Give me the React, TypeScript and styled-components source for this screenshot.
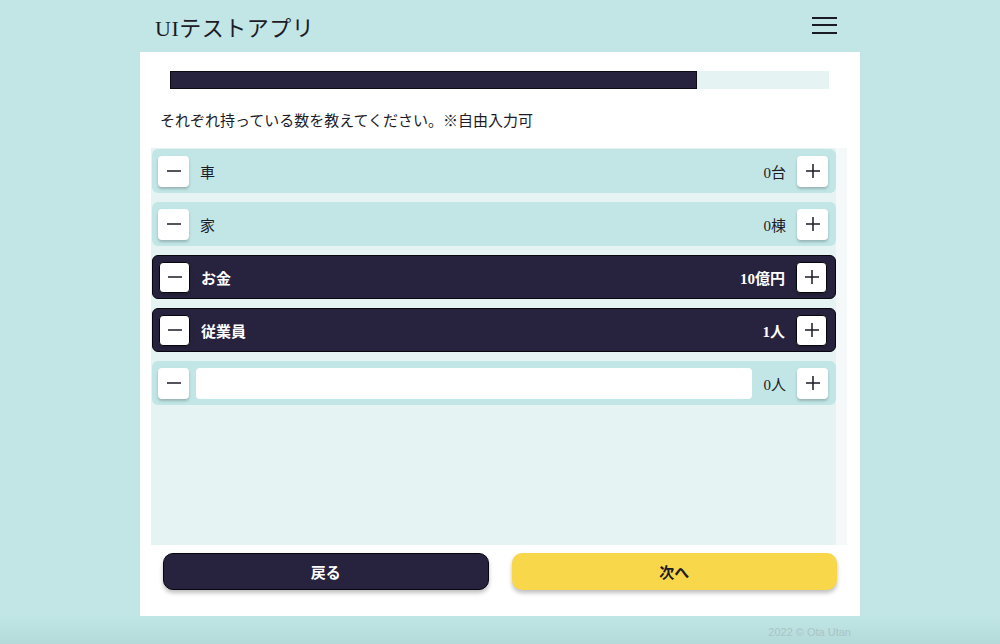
import styled, { createGlobalStyle } from 'styled-components';

const GlobalStyle = createGlobalStyle`
  html, body {
    margin: 0;
    padding: 0;
    background: #c2e6e6;
  }
  body {
    font-family: 'Liberation Serif', 'Noto Sans CJK JP', serif;
    color: #1c1b26;
  }
`;

interface Item {
  label: string;
  value: string;
  active?: boolean;
  editable?: boolean;
}

const items: Item[] = [
  { label: '車', value: '0台' },
  { label: '家', value: '0棟' },
  { label: 'お金', value: '10億円', active: true },
  { label: '従業員', value: '1人', active: true },
  { label: '', value: '0人', editable: true },
];

const progress = 0.8;

const MinusIcon = () => (
  <svg width="16" height="16" viewBox="0 0 16 16">
    <path d="M1 8h14" stroke="#1c1b26" strokeWidth="1.5" />
  </svg>
);

const PlusIcon = () => (
  <svg width="16" height="16" viewBox="0 0 16 16">
    <path d="M1 8h14M8 1v14" stroke="#1c1b26" strokeWidth="1.5" />
  </svg>
);

export default function App() {
  return (
    <>
      <GlobalStyle />
      <StyledPage>
        <Header>
          <Title>UIテストアプリ</Title>
          <Hamburger aria-label="menu">
            <span />
            <span />
            <span />
          </Hamburger>
        </Header>
        <Card>
          <ProgressTrack>
            <ProgressFill style={{ width: `${progress * 100}%` }} />
          </ProgressTrack>
          <Instruction>それぞれ持っている数を教えてください。※自由入力可</Instruction>
          <List>
            <Rows>
              {items.map((item, i) => (
                <Row key={i} $active={item.active}>
                  <StepButton $active={item.active}>
                    <MinusIcon />
                  </StepButton>
                  {item.editable ? <FreeInput /> : <Label>{item.label}</Label>}
                  <Value>{item.value}</Value>
                  <StepButton $active={item.active}>
                    <PlusIcon />
                  </StepButton>
                </Row>
              ))}
            </Rows>
          </List>
          <Actions>
            <ActionButton $variant="back">戻る</ActionButton>
            <ActionButton $variant="next">次へ</ActionButton>
          </Actions>
        </Card>
        <Footer>2022 © Ota Utan</Footer>
      </StyledPage>
    </>
  );
}

const StyledPage = styled.div`
  width: 720px;
  margin: 0 auto;
  min-height: 644px;
  display: flex;
  flex-direction: column;
`;

const Header = styled.header`
  height: 52px;
  display: flex;
  align-items: center;
  justify-content: space-between;
  padding: 0 23px 0 15px;
  box-sizing: border-box;
`;

const Title = styled.h1`
  margin: 0;
  font-size: 22px;
  font-weight: normal;
  letter-spacing: 0.5px;
  color: #1c1b26;
`;

const Hamburger = styled.button`
  width: 25px;
  height: 17px;
  padding: 0;
  border: none;
  background: none;
  display: flex;
  flex-direction: column;
  justify-content: space-between;
  margin-top: -2px;
  span {
    display: block;
    height: 2px;
    background: #1a1a24;
  }
`;

const Card = styled.main`
  background: #fff;
  height: 564px;
  box-sizing: border-box;
  padding: 19px 0 0;
  display: flex;
  flex-direction: column;
`;

const ProgressTrack = styled.div`
  height: 18px;
  margin: 0 31px 0 30px;
  background: #e6f3f3;
`;

const ProgressFill = styled.div`
  height: 100%;
  background: #27233f;
  border: 1px solid #0c0b14;
  box-sizing: border-box;
`;

const Instruction = styled.p`
  margin: 21px 0 0 20px;
  font-size: 15px;
  line-height: 22px;
  height: 38px;
  color: #1c1b26;
`;

const List = styled.div`
  margin: 0 13px 0 11px;
  height: 397px;
  background: #e6f3f3;
  border-right: 11px solid #f6f9f9;
  box-sizing: border-box;
  padding: 1px 0 0 1px;
`;

const Rows = styled.div`
  display: flex;
  flex-direction: column;
  gap: 9px;
`;

const Row = styled.div<{ $active?: boolean }>`
  height: 44px;
  box-sizing: border-box;
  display: flex;
  align-items: center;
  gap: 11px;
  padding: 0 8px 0 6px;
  border-radius: 6px;
  background: ${(p) => (p.$active ? '#27233f' : '#c2e6e6')};
  border: ${(p) => (p.$active ? '1px solid #07060c' : 'none')};
  color: ${(p) => (p.$active ? '#fff' : '#1c1b26')};
  font-weight: ${(p) => (p.$active ? 'bold' : 'normal')};
`;

const StepButton = styled.button<{ $active?: boolean }>`
  flex: none;
  width: 31px;
  height: 31px;
  padding: 0;
  display: flex;
  align-items: center;
  justify-content: center;
  background: #fff;
  border-radius: 4px;
  border: ${(p) => (p.$active ? '1px solid #07060c' : 'none')};
  box-shadow: 0 2px 3px rgba(0, 0, 0, 0.22);
`;

const Label = styled.span`
  flex: 1;
  font-size: 15px;
`;

const FreeInput = styled.input`
  flex: 1;
  height: 29px;
  border: none;
  border-radius: 4px;
  background: #fff;
  outline: none;
  margin-left: -4px;
`;

const Value = styled.span`
  font-size: 15px;
  margin-left: auto;
`;

const Actions = styled.div`
  display: grid;
  grid-template-columns: 1fr 1fr;
  gap: 23px;
  padding: 8px 23px 0;
`;

const ActionButton = styled.button<{ $variant: 'back' | 'next' }>`
  height: 37px;
  border-radius: 10px;
  font-family: inherit;
  font-size: 15px;
  font-weight: bold;
  cursor: pointer;
  background: ${(p) => (p.$variant === 'back' ? '#27233f' : '#f8d74a')};
  color: ${(p) => (p.$variant === 'back' ? '#fff' : '#1c1b26')};
  border: ${(p) => (p.$variant === 'back' ? '1px solid #07060c' : 'none')};
  box-shadow: 0 3px 4px rgba(0, 0, 0, 0.25);
`;

const Footer = styled.footer`
  height: 28px;
  display: flex;
  align-items: center;
  justify-content: flex-end;
  padding-top: 2px;
  font-family: 'Liberation Sans', sans-serif;
  font-size: 11px;
  color: #a9c4c4;
  margin: 0 -140px;
  padding-right: 149px;
  background: linear-gradient(#c2e6e6, #b2d8d8);
`;
